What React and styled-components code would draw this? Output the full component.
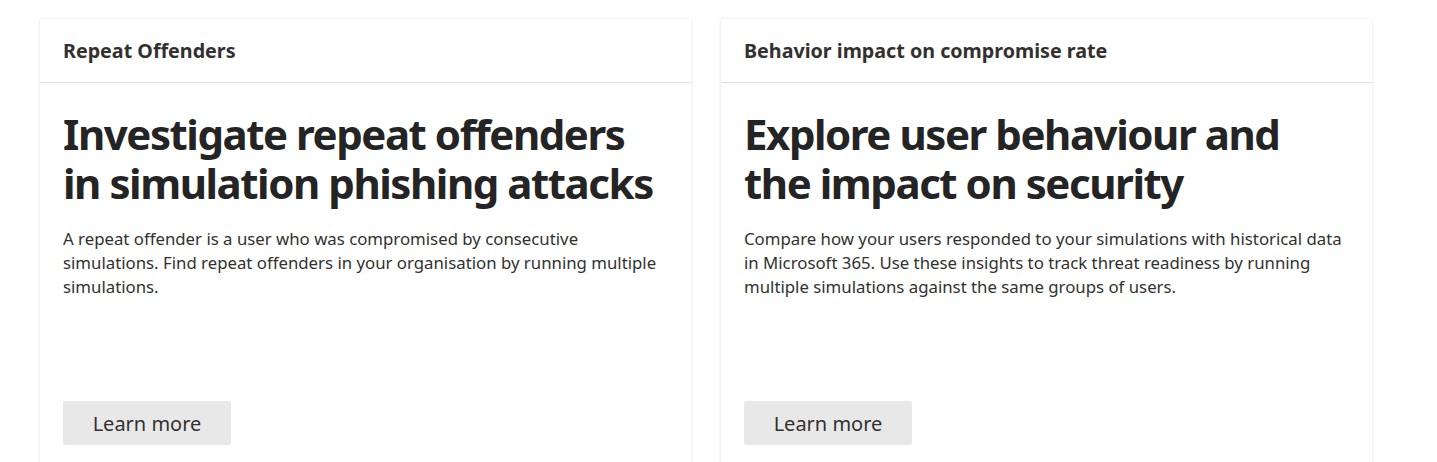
import React from 'react'
import { styled, createGlobalStyle } from 'styled-components'

const GlobalStyle = createGlobalStyle`
  body {
    margin: 0;
    background: #ffffff;
    font-family: "Noto Sans", "Open Sans", sans-serif;
    color: #242424;
  }
`

const cards = [
  {
    header: 'Repeat Offenders',
    title: 'Investigate repeat offenders in simulation phishing attacks',
    text: 'A repeat offender is a user who was compromised by consecutive simulations. Find repeat offenders in your organisation by running multiple simulations.',
  },
  {
    header: 'Behavior impact on compromise rate',
    title: 'Explore user behaviour and the impact on security',
    text: 'Compare how your users responded to your simulations with historical data in Microsoft 365. Use these insights to track threat readiness by running multiple simulations against the same groups of users.',
  },
]

export default function App() {
  return (
    <>
      <GlobalStyle />
      <Page>
        {cards.map((card) => (
          <Card key={card.header}>
            <CardHeader>{card.header}</CardHeader>
            <CardBody>
              <Title>{card.title}</Title>
              <Text>{card.text}</Text>
              <LearnButton>Learn more</LearnButton>
            </CardBody>
          </Card>
        ))}
      </Page>
    </>
  )
}

const Page = styled.div`
  display: flex;
  gap: 30px;
  padding: 19px 0 0 40px;
  height: 462px;
  box-sizing: border-box;
  overflow: hidden;
`

const Card = styled.div`
  width: 651px;
  height: 460px;
  flex-shrink: 0;
  display: flex;
  flex-direction: column;
  background: #fff;
  box-shadow: 0 0 3px rgba(0, 0, 0, 0.1), 0 1px 2px rgba(0, 0, 0, 0.06);
`

const CardHeader = styled.div`
  height: 63px;
  display: flex;
  align-items: center;
  padding: 0 23px;
  border-bottom: 1px solid #e0e0e0;
  font-size: 19.7px;
  font-weight: 700;
  color: #323130;
`

const CardBody = styled.div`
  flex: 1;
  display: flex;
  flex-direction: column;
  padding: 26px 23px 23px 23px;
`

const Title = styled.h2`
  margin: 0;
  font-size: 42px;
  line-height: 49px;
  font-weight: 700;
  letter-spacing: -1.45px;
  color: #242424;
  max-width: 600px;
`

const Text = styled.p`
  margin: 20px 0 0 0;
  font-size: 16.8px;
  line-height: 24px;
  color: #323130;
  max-width: 606px;
`

const LearnButton = styled.button`
  margin-top: auto;
  margin-bottom: 11px;
  width: 168px;
  height: 44px;
  border: none;
  border-radius: 2px;
  background: #e8e8e8;
  font-family: inherit;
  font-size: 20px;
  color: #323130;
  cursor: pointer;
`
